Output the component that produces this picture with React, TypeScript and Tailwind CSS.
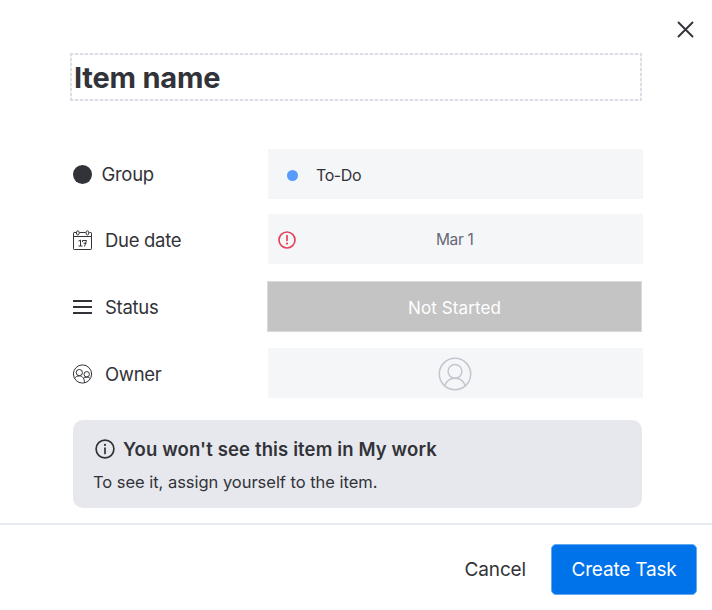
import type { ReactNode } from "react";
import clsx from "clsx";

interface FieldRowProps {
  icon: ReactNode;
  label: string;
  labelClassName: string;
  className?: string;
  children: ReactNode;
}

function CalendarIcon() {
  return (
    <svg width="20" height="20" viewBox="0 0 20 20" fill="none" stroke="#323338" strokeWidth="1">
      <path d="M3.2 2.5H1.2a.7.7 0 0 0-.7.7V18.8a.7.7 0 0 0 .7.7H17.8a.7.7 0 0 0 .7-.7V3.2a.7.7 0 0 0-.7-.7H16.3M6.500 2.500H12.600" />
      <path d="M.5 6.500H18.500" />
      <ellipse cx="4.800" cy="2.900" rx="1.400" ry="2.100" />
      <ellipse cx="14.400" cy="2.900" rx="1.400" ry="2.100" />
      <path d="M5.500 11.200L7.500 10v6M5.500 16h4M9.500 12v-1.500h4L11.500 16.500M10.500 13.200h3" />
    </svg>
  );
}

function PeopleIcon() {
  return (
    <svg width="20" height="20" viewBox="0 0 20 20" fill="none" stroke="#323338" strokeWidth="1">
      <circle cx="9.5" cy="10" r="9.1" />
      <circle cx="6.3" cy="8.6" r="3.1" />
      <circle cx="13.7" cy="10.3" r="2.7" />
      <path d="M1.5 14.500c1-1.700 2.700-2.600 4.800-2.600 3.200 0 5.200 2.500 5.200 7" />
      <path d="M10.400 14.300c.8-.8 1.900-1.200 3.300-1.200 1.500 0 2.700.5 3.500 1.500" />
    </svg>
  );
}

function AlertIcon() {
  return (
    <svg width="18" height="18" viewBox="0 0 18 18" fill="none" stroke="#e2445c">
      <circle cx="9" cy="9" r="8" strokeWidth="1.7" />
      <path d="M9 4.700v4.800" strokeWidth="1.7" strokeLinecap="round" />
      <circle cx="9" cy="12.600" r="1.1" fill="#e2445c" stroke="none" />
    </svg>
  );
}

function PersonIcon() {
  return (
    <svg width="34" height="34" viewBox="0 0 34 34" fill="none" stroke="#c4c5cf" strokeWidth="1.5">
      <circle cx="17" cy="17" r="15.700" />
      <circle cx="17" cy="14.300" r="6.900" />
      <path d="M6.800 28.800c1.500-4.700 5.400-7.600 10.200-7.600s8.700 2.900 10.200 7.600" />
    </svg>
  );
}

function InfoIcon() {
  return (
    <svg width="20" height="20" viewBox="0 0 20 20" fill="none" stroke="#323338">
      <circle cx="10" cy="10" r="8.9" strokeWidth="1.7" />
      <path d="M10 9.200v5.200" strokeWidth="1.7" strokeLinecap="round" />
      <circle cx="10" cy="5.900" r="1.1" fill="#323338" stroke="none" />
    </svg>
  );
}

function FieldRow({ icon, label, labelClassName, className, children }: FieldRowProps) {
  return (
    <div className="flex">
      <div className="flex h-[50px] w-[195px] shrink-0 items-center">
        <span className="flex w-5 shrink-0">{icon}</span>
        <span className={clsx("text-[18.5px] tracking-[-0.3px] whitespace-nowrap", labelClassName)}>{label}</span>
      </div>
      <div className={clsx("flex items-center", className ?? "h-[50px] w-[375px] bg-[#f5f6f8]")}>{children}</div>
    </div>
  );
}

export default function App() {
  return (
    <div className="flex h-[610px] w-[712px] flex-col overflow-hidden bg-white font-[Inter,sans-serif] text-[#323338]">
      <div className="flex h-[53px] shrink-0 justify-end pt-[21px] pr-[18px]">
        <button aria-label="Close" className="h-[17px] w-[17px]">
          <svg width="17" height="17" viewBox="0 0 17 17" stroke="#323338" strokeWidth="1.9" strokeLinecap="round">
            <path d="M1.500 1.500l14 14M15.500 1.500l-14 14" />
          </svg>
        </button>
      </div>

      {/* Dashed outline, one strip per side */}
      <div className="ml-[70px] flex h-12 w-[572px] shrink-0 items-center bg-[image:repeating-linear-gradient(90deg,#dddde6_0_3px,#f6f6f9_3px_5px),repeating-linear-gradient(90deg,#dddde6_0_3px,#f6f6f9_3px_5px),repeating-linear-gradient(#dddde6_0_3px,#f6f6f9_3px_5px),repeating-linear-gradient(#dddde6_0_3px,#f6f6f9_3px_5px)] bg-[length:100%_2px,100%_2px,2px_100%,2px_100%] bg-[position:0_0,0_100%,0_0,100%_0] bg-no-repeat pt-0.5 pl-1">
        <h1 className="text-[29px] font-bold tracking-[-0.2px] whitespace-nowrap">Item name</h1>
      </div>

      {/* Fields */}
      <div className="mt-12 ml-[73px] flex shrink-0 flex-col">
        <FieldRow
          icon={<span className="h-[19px] w-[19px] rounded-full bg-[#323338]" />}
          label="Group"
          labelClassName="ml-[8.5px] mt-0.5"
        >
          <span className="mt-[3px] ml-[19px] h-[11px] w-[11px] rounded-full bg-[#579bfc]" />
          <span className="mt-0.5 ml-[18px] text-[16px] tracking-[-0.4px]">To-Do</span>
        </FieldRow>
        <div className="h-[15px]" />
        <FieldRow
          icon={
            <span className="mt-px">
              <CalendarIcon />
            </span>
          }
          label="Due date"
          labelClassName="ml-[12px] mt-1"
        >
          <span className="mt-px ml-[9.5px]">
            <AlertIcon />
          </span>
          <span className="mt-0.5 mr-[29px] flex-1 text-center text-[15.5px] tracking-[-0.3px] text-[#676879]">
            Mar 1
          </span>
        </FieldRow>
        <div className="h-[17px]" />
        <FieldRow
          icon={
            <span className="mt-px flex w-[19px] flex-col gap-1">
              <span className="h-0.5 bg-[#323338]" />
              <span className="h-0.5 bg-[#323338]" />
              <span className="h-0.5 bg-[#323338]" />
            </span>
          }
          label="Status"
          labelClassName="ml-[12px] mt-1"
          className="-ml-px h-[51px] w-[375px] justify-center border border-[#dadada] bg-[#c4c4c4]"
        >
          <span className="mt-1 text-[17px] tracking-[0.1px] text-white">Not Started</span>
        </FieldRow>
        <div className="h-4" />
        <FieldRow
          icon={
            <span className="mt-px">
              <PeopleIcon />
            </span>
          }
          label="Owner"
          labelClassName="ml-[12px] mt-1"
          className="h-[50px] w-[375px] justify-center bg-[#f5f6f8]"
        >
          <span className="mt-px mr-[1.5px]">
            <PersonIcon />
          </span>
        </FieldRow>
      </div>

      {/* Visibility notice */}
      <div className="mt-[22px] ml-[73px] h-[88px] w-[569px] shrink-0 rounded-[10px] bg-[#e7e8ee] pt-[17px] pl-5">
        <div className="flex h-6 items-center">
          <span className="ml-0.5">
            <InfoIcon />
          </span>
          <span className="mt-0.5 ml-2 text-[18.5px] font-semibold tracking-[0.13px] whitespace-nowrap">
            You won't see this item in My work
          </span>
        </div>
        <p className="mt-[9px] text-[16.5px] leading-6 tracking-[-0.03px] whitespace-nowrap">
          To see it, assign yourself to the item.
        </p>
      </div>

      <div className="mt-[15px] flex flex-1 items-start justify-end border-t-2 border-[#e6e9ef] pt-[19px] pr-[15px]">
        <button className="mr-[25px] h-[51px] pt-0.5 text-[19px] tracking-[-0.15px]">Cancel</button>
        <button className="h-[51px] w-[146px] rounded-[5px] border border-[#62a9f2] bg-[#0073ea] pt-0.5 text-[19px] tracking-[-0.2px] whitespace-nowrap text-white">
          Create Task
        </button>
      </div>
    </div>
  );
}
